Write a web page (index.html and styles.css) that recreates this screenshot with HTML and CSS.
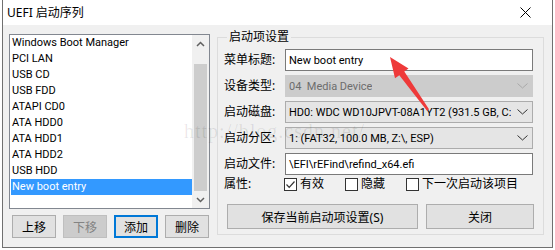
FILE: index.html
```html
<!DOCTYPE html>
<html lang="zh-CN">
<head>
<meta charset="UTF-8" />
<title>UEFI 启动序列</title>
<link rel="stylesheet" href="styles.css">
</head>
<body>
  <div class="window">
    <div class="titlebar">
      <span class="title">UEFI 启动序列</span>
      <svg class="close" width="11" height="11" viewBox="0 0 11 11"><path d="M0.5 0.5L10.5 10.5M10.5 0.5L0.5 10.5" stroke="#000" stroke-width="1" fill="none"/></svg>
    </div>

    <div class="client">
      <div class="left">
        <div class="listbox">
          <ul class="items">
            <li>Windows Boot Manager</li>
            <li>PCI LAN</li>
            <li>USB CD</li>
            <li>USB FDD</li>
            <li>ATAPI CD0</li>
            <li>ATA HDD0</li>
            <li>ATA HDD1</li>
            <li>ATA HDD2</li>
            <li>USB HDD</li>
            <li class="selected">New boot entry</li>
          </ul>
          <div class="scrollbar">
            <div class="sb-arrow"><svg width="9" height="6" viewBox="0 0 9 6"><path d="M1 5L4.5 1.5L8 5" stroke="#606060" stroke-width="1.5" fill="none"/></svg></div>
            <div class="sb-track"><div class="sb-thumb"></div></div>
            <div class="sb-arrow"><svg width="9" height="6" viewBox="0 0 9 6"><path d="M1 1L4.5 4.5L8 1" stroke="#606060" stroke-width="1.5" fill="none"/></svg></div>
          </div>
        </div>
        <div class="btn-row">
          <button class="btn">上移</button>
          <button class="btn" disabled>下移</button>
          <button class="btn default">添加</button>
          <button class="btn">删除</button>
        </div>
      </div>

      <fieldset class="group">
        <legend>启动项设置</legend>
        <div class="form">
          <div class="row">
            <span class="label">菜单标题:</span>
            <div class="edit">New boot entry</div>
          </div>
          <div class="row">
            <span class="label">设备类型:</span>
            <div class="combo disabled"><span class="val">04&nbsp; Media Device</span>
              <svg class="chev" width="11" height="6" viewBox="0 0 11 6"><path d="M0.5 0.5L5.5 5L10.5 0.5" stroke="#a8a8a8" stroke-width="1" fill="none"/></svg></div>
          </div>
          <div class="row">
            <span class="label">启动磁盘:</span>
            <div class="combo"><span class="val">HD0: WDC WD10JPVT-08A1YT2 (931.5 GB, C:</span>
              <svg class="chev" width="11" height="6" viewBox="0 0 11 6"><path d="M0.5 0.5L5.5 5L10.5 0.5" stroke="#333" stroke-width="1" fill="none"/></svg></div>
          </div>
          <div class="row">
            <span class="label">启动分区:</span>
            <div class="combo"><span class="val">1: (FAT32, 100.0 MB, Z:\, ESP)</span>
              <svg class="chev" width="11" height="6" viewBox="0 0 11 6"><path d="M0.5 0.5L5.5 5L10.5 0.5" stroke="#333" stroke-width="1" fill="none"/></svg></div>
          </div>
          <div class="row">
            <span class="label">启动文件:</span>
            <div class="edit">\EFI\rEFind\refind_x64.efi</div>
          </div>
          <div class="row checks">
            <span class="label">属性:</span>
            <label class="check"><span class="box"><svg width="11" height="11" viewBox="0 0 11 11"><path d="M1.5 5.5L4.2 8.3L9.5 2.5" stroke="#333" stroke-width="1.2" fill="none"/></svg></span>有效</label>
            <label class="check"><span class="box"></span>隐藏</label>
            <label class="check"><span class="box"></span>下一次启动该项目</label>
          </div>
        </div>
        <div class="actions">
          <button class="btn save">保存当前启动项设置(S)</button>
          <button class="btn closebtn">关闭</button>
        </div>
      </fieldset>
    </div>

    <div class="watermark">http://blog.csdn.net/</div>
    <svg class="annot" width="555" height="250" viewBox="0 0 555 250">
      <polygon points="390,57 408.5,68.5 404.3,71.6 429,109.3 427,110.7 399.3,75.2 395,78.3" fill="#ee3a3a"/>
    </svg>
  </div>
</body>
</html>
```

FILE: styles.css
```css
* { box-sizing: border-box; margin: 0; padding: 0; }
body {
  background: #fff;
  font-family: "Noto Sans", "Noto Sans CJK SC", sans-serif;
  font-size: 12px;
  color: #000;
  width: 555px; height: 250px; overflow: hidden;
}

/* Window frame */
.window {
  position: relative;
  width: 551px; height: 248px;
  margin-left: 2px;
  border: 1px solid #707070; border-top: none;
  background: #f0f0f0;
}
.titlebar {
  height: 25px; background: #fff;
  display: flex; align-items: center; justify-content: space-between;
  padding: 0 21px 0 4px;
}
.title { font-size: 12px; line-height: 16px; margin-top: 1px; }
.close { display: block; }

.client { display: flex; align-items: flex-start; }

/* latin text in list and fields */
.items, .edit, .val {
  font-family: Roboto, "Noto Sans CJK SC", sans-serif;
  font-size: 11px;
}

/* Left: list + buttons */
.left { margin: 9px 0 0 6px; width: 201px; }
.listbox {
  display: flex; height: 175px;
  border: 1px solid #828790; background: #fff;
}
.items { list-style: none; flex: 1; padding: 0 0 0 1px; }
.items li {
  height: 16px; line-height: 16px; padding-left: 1px;
  white-space: nowrap;
}
.items li.selected { background: #3399ff; color: #fff; }
.scrollbar {
  width: 17px; background: #f0f0f0;
  display: flex; flex-direction: column;
}
.sb-arrow { height: 17px; display: flex; align-items: center; justify-content: center; }
.sb-track { flex: 1; padding: 12px 2px 0 2px; }
.sb-thumb { height: 100%; background: #cdcdcd; }

.btn-row { display: flex; gap: 7px; margin: 6px 0 0 3px; }
.btn {
  font: inherit; font-size: 12px;
  width: 44px; height: 23px;
  background: #e1e1e1; border: 1px solid #adadad; color: #000;
}
.btn:disabled { background: #cccccc; border-color: #bfbfbf; color: #838383; }
.btn.default { border: 2px solid #0078d7; }

/* Right: group box */
.group {
  margin: 5px 0 0 7px;
  width: 327px; height: 205px;
  border: 1px solid #dcdcdc;
  padding: 0 0 0 6px;
}
.group legend {
  margin-left: 3px; padding: 0 2px;
  line-height: 14px; font-size: 12px;
}
.form { display: flex; flex-direction: column; gap: 4px; margin-top: 5px; }
.row { display: flex; align-items: center; height: 22px; }
.label { width: 61px; line-height: 16px; }
.edit, .combo {
  width: 248px; height: 22px;
  display: flex; align-items: center;
  padding-left: 3px; white-space: nowrap; overflow: hidden;
}
.edit { background: #fff; border: 1px solid #7a7a7a; }
.combo {
  background: #e5e5e5; border: 1px solid #acacac;
  justify-content: space-between; padding-right: 4px;
}
.combo.disabled { background: #cccccc; border-color: #cccccc; color: #6d6d6d; }
.val { overflow: hidden; }
.chev { flex: none; margin-left: 4px; }

.row.checks { height: 16px; margin-top: -3px; }
.check { display: flex; align-items: center; gap: 3px; margin-right: 21px; line-height: 16px; }
.check:first-of-type { margin-left: -1px; }
.box {
  width: 13px; height: 13px; background: #fff; border: 1px solid #333;
  display: flex; align-items: center; justify-content: center;
}
.box svg { display: block; }

.actions { display: flex; gap: 8px; margin: 12px 0 0 3px; }
.btn.save { width: 191px; height: 25px; }
.btn.closebtn { width: 108px; height: 25px; }

/* overlays from the original screenshot */
.watermark {
  position: absolute; left: 181px; top: 120px;
  font-family: "Liberation Serif", serif; font-size: 20px; letter-spacing: 1px;
  color: rgba(0,0,0,0.09); pointer-events: none;
}
.annot { position: absolute; left: -3px; top: 0; pointer-events: none; }
```
